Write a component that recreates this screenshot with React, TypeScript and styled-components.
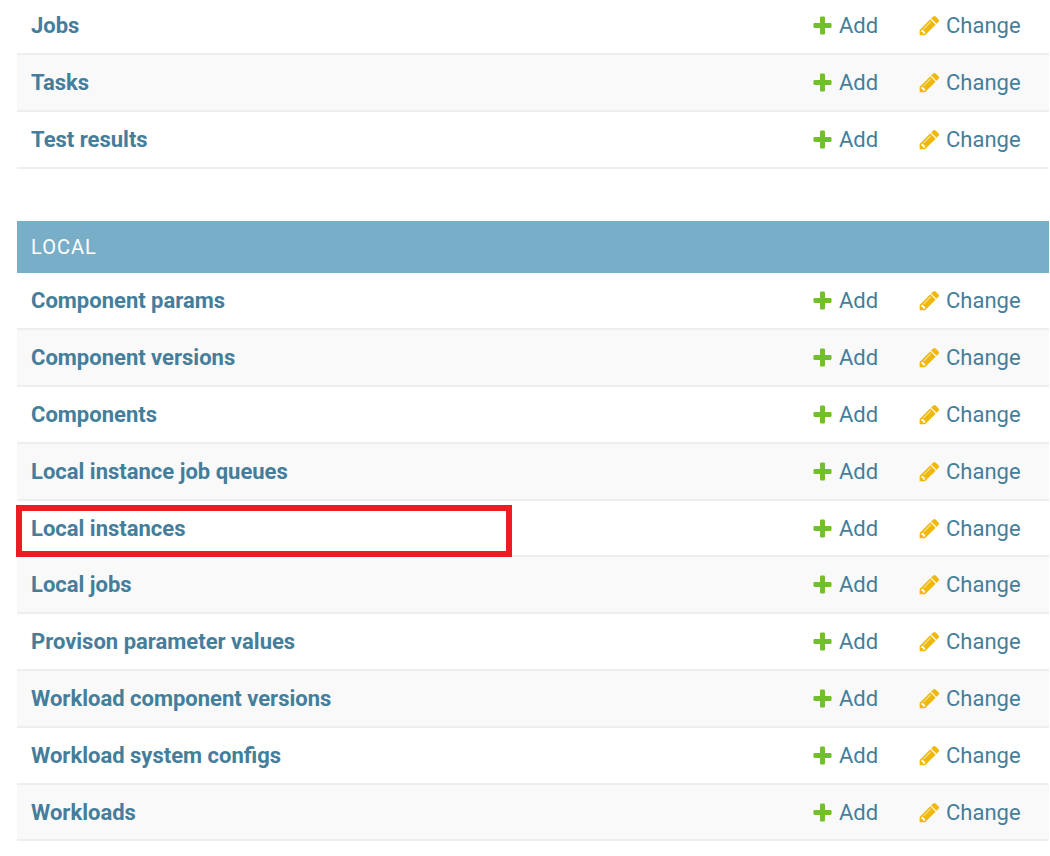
import React from "react";
import styled, { createGlobalStyle } from "styled-components";

const GlobalStyle = createGlobalStyle`
  *, *::before, *::after { box-sizing: border-box; }
  body {
    margin: 0;
    background: #fff;
    color: #333;
    font-family: Roboto, "Liberation Sans", sans-serif;
    font-size: 22px;
    overflow: hidden;
  }
`;

const Page = styled.main`
  display: flex;
  flex-direction: column;
  gap: 52px;
  margin: -2px 1px 0 17px;
`;

const ModuleTable = styled.table`
  width: 100%;
  border-collapse: separate;
  border-spacing: 0;
`;

const ModuleCaption = styled.caption`
  height: 52px;
  padding: 0 14px;
  background: #79aec8;
  text-align: left;
  font-size: 20px;
  line-height: 52px;
  letter-spacing: 1px;
  text-transform: uppercase;
`;

const ModuleLink = styled.a`
  color: #fff;
  text-decoration: none;
`;

const Row = styled.tr`
  height: 57px;

  &:nth-child(even) { background: #f9f9f9; }
  &:nth-child(5n) { height: 56px; }
`;

const NameCell = styled.th`
  padding: 0 14px;
  border-bottom: 2px solid #eee;
  text-align: left;
  font-weight: 700;
  line-height: 29px;
`;

const ActionCell = styled.td<{ $width: number }>`
  width: ${(p) => p.$width}px;
  padding: 0;
  border-bottom: 2px solid #eee;
  line-height: 29px;
`;

const NameFrame = styled.div<{ $marked: boolean }>`
  position: relative;

  &::after {
    content: "";
    display: ${(p) => (p.$marked ? "block" : "none")};
    position: absolute;
    top: -9px;
    left: -15px;
    width: 496px;
    height: 52px;
    border: 6px solid #ed1c24;
    pointer-events: none;
  }
`;

const TextLink = styled.a`
  color: #447e9b;
  text-decoration: none;
`;

const ActionLink = styled(TextLink)`
  display: flex;
  align-items: center;
  gap: 5px;
`;

const Icon = styled.svg`
  flex: none;
  width: 23px;
  height: 23px;
`;

const AddIcon = () => (
  <Icon viewBox="0 0 1792 1792" aria-hidden="true">
    <path
      fill="#70bf2b"
      d="M1600 796v192q0 40-28 68t-68 28h-416v416q0 40-28 68t-68 28h-192q-40 0-68-28t-28-68v-416h-416q-40 0-68-28t-28-68v-192q0-40 28-68t68-28h416v-416q0-40 28-68t68-28h192q40 0 68 28t28 68v416h416q40 0 68 28t28 68z"
    />
  </Icon>
);

const ChangeIcon = () => (
  <Icon viewBox="0 0 1792 1792" aria-hidden="true">
    <path
      fill="#efb80b"
      d="M491 1536l91-91-235-235-91 91v107h128v128h107zm523-928q0-22-22-22-10 0-17 7l-542 542q-7 7-7 17 0 22 22 22 10 0 17-7l542-542q7-7 7-17zm-54-192l416 416-832 832h-416v-416zm683 96q0 53-37 90l-166 166-416-416 166-165q36-38 90-38 53 0 91 38l235 234q37 39 37 91z"
    />
  </Icon>
);

interface ModuleProps {
  title?: string;
  models: string[];
  marked?: string;
}

const Module = ({ title, models, marked }: ModuleProps) => (
  <ModuleTable>
    {title && (
      <ModuleCaption>
        <ModuleLink href="#local">{title}</ModuleLink>
      </ModuleCaption>
    )}
    <tbody>
      {models.map((model) => (
        <Row key={model}>
          <NameCell scope="row">
            <NameFrame $marked={model === marked}>
              <TextLink href="#list">{model}</TextLink>
            </NameFrame>
          </NameCell>
          <ActionCell $width={107}>
            <ActionLink href="#add">
              <AddIcon />
              Add
            </ActionLink>
          </ActionCell>
          <ActionCell $width={131}>
            <ActionLink href="#change">
              <ChangeIcon />
              Change
            </ActionLink>
          </ActionCell>
        </Row>
      ))}
    </tbody>
  </ModuleTable>
);

const localModels = [
  "Component params",
  "Component versions",
  "Components",
  "Local instance job queues",
  "Local instances",
  "Local jobs",
  "Provison parameter values",
  "Workload component versions",
  "Workload system configs",
  "Workloads",
];

export default function App() {
  return (
    <>
      <GlobalStyle />
      <Page>
        <Module models={["Jobs", "Tasks", "Test results"]} />
        <Module title="Local" models={localModels} marked="Local instances" />
      </Page>
    </>
  );
}
